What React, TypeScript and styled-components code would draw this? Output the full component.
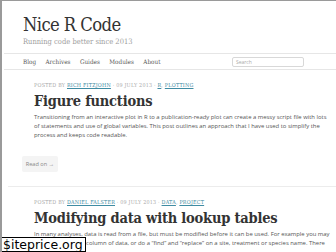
import React from "react";
import styled, { createGlobalStyle } from "styled-components";

const Global = createGlobalStyle`
  html, body { margin: 0; padding: 0; background: #fff; }
  body { width: 336px; height: 252px; overflow: hidden; }
`;

const Frame = styled.div`
  position: relative;
  width: 334px;
  height: 251px;
  border-top: 1px solid #9a9a9a;
  border-left: 2px solid #9a9a9a;
  background: #fff;
  overflow: hidden;
`;

const Header = styled.header`
  padding: 14px 0 0 21px;
  height: 38px;
`;

const SiteTitle = styled.h1`
  margin: 0;
  font-family: "DejaVu Serif", serif;
  font-stretch: condensed;
  font-weight: normal;
  font-size: 18.3px;
  line-height: 20px;
  color: #333;
  letter-spacing: -0.6px;
`;

const Tagline = styled.div`
  margin-top: 2px;
  font-family: "DejaVu Serif", serif;
  font-stretch: condensed;
  font-size: 7.5px;
  line-height: 10px;
  color: #a0a0a0;
`;

const Nav = styled.nav`
  margin-left: 2px;
  height: 15px;
  border-top: 1px solid #e6e6e6;
  border-bottom: 1px solid #e6e6e6;
  display: flex;
  align-items: center;
  justify-content: space-between;
  padding: 0 32px 0 19px;
`;

const NavList = styled.div`
  display: flex;
  gap: 9.5px;
`;

const NavItem = styled.span`
  font-family: "DejaVu Serif", serif;
  font-stretch: condensed;
  font-size: 6.3px;
  color: #555;
`;

const Search = styled.div`
  width: 67px;
  height: 8px;
  border: 1px solid #d8d8d8;
  border-radius: 2px;
  font-family: "Open Sans", sans-serif;
  font-size: 5px;
  line-height: 8px;
  color: #aaa;
  padding-left: 3px;
`;

const Post = styled.article<{ $top: number }>`
  padding: ${(p) => p.$top}px 0 0 32px;
`;

const Meta = styled.div`
  font-family: "DejaVu Serif", serif;
  font-stretch: condensed;
  font-size: 5.4px;
  letter-spacing: 0.2px;
  color: #aaa;
  text-transform: uppercase;
  line-height: 6px;
  white-space: nowrap;
`;

const MetaLink = styled.span`
  color: #3f8ca3;
  text-decoration: underline;
`;

const PostTitle = styled.h2`
  margin: 3px 0 0 0;
  font-family: "DejaVu Serif", serif;
  font-stretch: condensed;
  font-weight: bold;
  font-size: 14.5px;
  line-height: 20px;
  color: #333;
  letter-spacing: -0.2px;
  white-space: nowrap;
`;

const Excerpt = styled.p`
  margin: 2px 0 0 0;
  font-family: "Open Sans", sans-serif;
  font-size: 5.9px;
  line-height: 9px;
  color: #555;
`;

const Line = styled.span`
  display: block;
  white-space: nowrap;
`;

const ReadOn = styled.div`
  margin: 16px 0 0 -12px;
  width: 36px;
  height: 16px;
  background: #f4f4f4;
  border-radius: 2px;
  font-family: "Open Sans", sans-serif;
  font-size: 5.6px;
  line-height: 16px;
  color: #888;
  text-align: center;
`;

const Divider = styled.hr`
  margin: 14px 0 0 6px;
  border: 0;
  border-top: 1px solid #ececec;
`;

const Watermark = styled.div`
  position: absolute;
  left: -2px;
  bottom: 0;
  height: 13px;
  padding: 0 2px;
  background: #fff;
  border: 1px solid #000;
  font-family: "DejaVu Sans", sans-serif;
  font-size: 12.5px;
  line-height: 13px;
  color: #000;
`;

export default function App() {
  return (
    <>
      <Global />
      <Frame>
        <Header>
          <SiteTitle>Nice R Code</SiteTitle>
          <Tagline>Running code better since 2013</Tagline>
        </Header>
        <Nav>
          <NavList>
            <NavItem>Blog</NavItem>
            <NavItem>Archives</NavItem>
            <NavItem>Guides</NavItem>
            <NavItem>Modules</NavItem>
            <NavItem>About</NavItem>
          </NavList>
          <Search>Search</Search>
        </Nav>
        <Post $top={12}>
          <Meta>
            Posted by <MetaLink>Rich FitzJohn</MetaLink> · 09 July 2013 ·{" "}
            <MetaLink>R</MetaLink>, <MetaLink>plotting</MetaLink>
          </Meta>
          <PostTitle>Figure functions</PostTitle>
          <Excerpt>
            <Line>Transitioning from an interactive plot in R to a publication-ready plot can create a messy script file with lots</Line>
            <Line>of statements and use of global variables. This post outlines an approach that I have used to simplify the</Line>
            <Line>process and keeps code readable.</Line>
          </Excerpt>
          <ReadOn>Read on →</ReadOn>
        </Post>
        <Divider />
        <Post $top={12}>
          <Meta>
            Posted by <MetaLink>Daniel Falster</MetaLink> · 09 July 2013 ·{" "}
            <MetaLink>Data</MetaLink>, <MetaLink>project</MetaLink>
          </Meta>
          <PostTitle>Modifying data with lookup tables</PostTitle>
          <Excerpt>
            <Line>In many analyses, data is read from a file, but must be modified before it can be used. For example you may</Line>
            <Line>want to add a new column of data, or do a “find” and “replace” on a site, treatment or species name. There</Line>
          </Excerpt>
        </Post>
        <Watermark>$iteprice.org</Watermark>
      </Frame>
    </>
  );
}
